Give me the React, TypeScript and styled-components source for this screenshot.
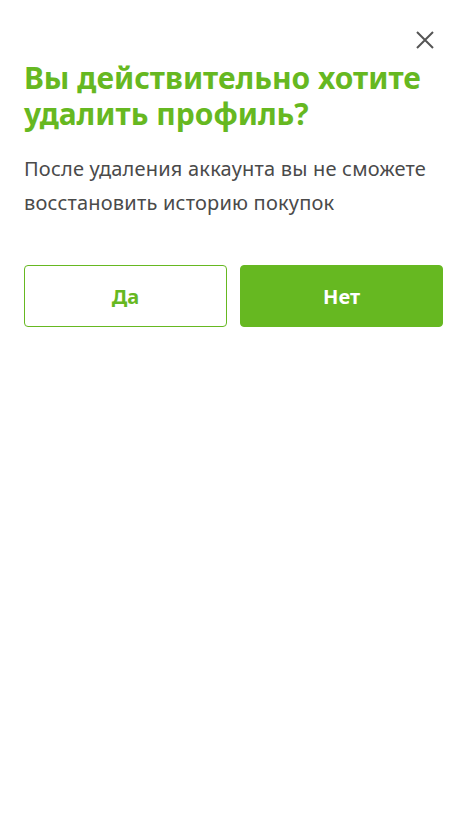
import React from "react";
import styled, { createGlobalStyle } from "styled-components";

const GlobalStyle = createGlobalStyle`
  html, body {
    margin: 0;
    padding: 0;
    background: #fff;
  }
  body {
    font-family: "Noto Sans", "Open Sans", sans-serif;
  }
`;

const App: React.FC = () => {
  return (
    <>
      <GlobalStyle />
      <Modal>
        <CloseRow>
          <CloseButton aria-label="Закрыть">
            <svg width="20" height="20" viewBox="0 0 20 20">
              <path
                d="M2 2 L18 18 M18 2 L2 18"
                stroke="#555"
                strokeWidth="2"
                fill="none"
              />
            </svg>
          </CloseButton>
        </CloseRow>
        <Title>Вы действительно хотите удалить профиль?</Title>
        <Description>
          После удаления аккаунта вы не сможете восстановить историю покупок
        </Description>
        <Buttons>
          <ActionButton $variant="outline">Да</ActionButton>
          <ActionButton $variant="filled">Нет</ActionButton>
        </Buttons>
      </Modal>
    </>
  );
};

export default App;

const Modal = styled.div`
  width: 419px;
  padding: 30px 19px 0 24px;
  box-sizing: content-box;
`;

const CloseRow = styled.div`
  display: flex;
  justify-content: flex-end;
  margin-right: 8px;
`;

const CloseButton = styled.button`
  background: none;
  border: none;
  padding: 0;
  width: 20px;
  height: 20px;
  cursor: pointer;
  display: flex;
`;

const Title = styled.h2`
  margin: 10px 0 0;
  color: #66b821;
  font-size: 30px;
  line-height: 36px;
  font-weight: 700;
`;

const Description = styled.p`
  margin: 20px 0 0;
  color: #4a4a4a;
  font-size: 20px;
  line-height: 34px;
  letter-spacing: 0.2px;
`;

const Buttons = styled.div`
  display: grid;
  grid-template-columns: 1fr 1fr;
  gap: 13px;
  margin-top: 45px;
`;

const ActionButton = styled.button<{ $variant: "outline" | "filled" }>`
  height: 62px;
  border-radius: 4px;
  font-family: "Noto Sans", "Open Sans", sans-serif;
  font-size: 20px;
  font-weight: 700;
  cursor: pointer;
  border: 1px solid #66b821;
  background: ${(p) => (p.$variant === "filled" ? "#66b821" : "#fff")};
  color: ${(p) => (p.$variant === "filled" ? "#fff" : "#66b821")};
`;
